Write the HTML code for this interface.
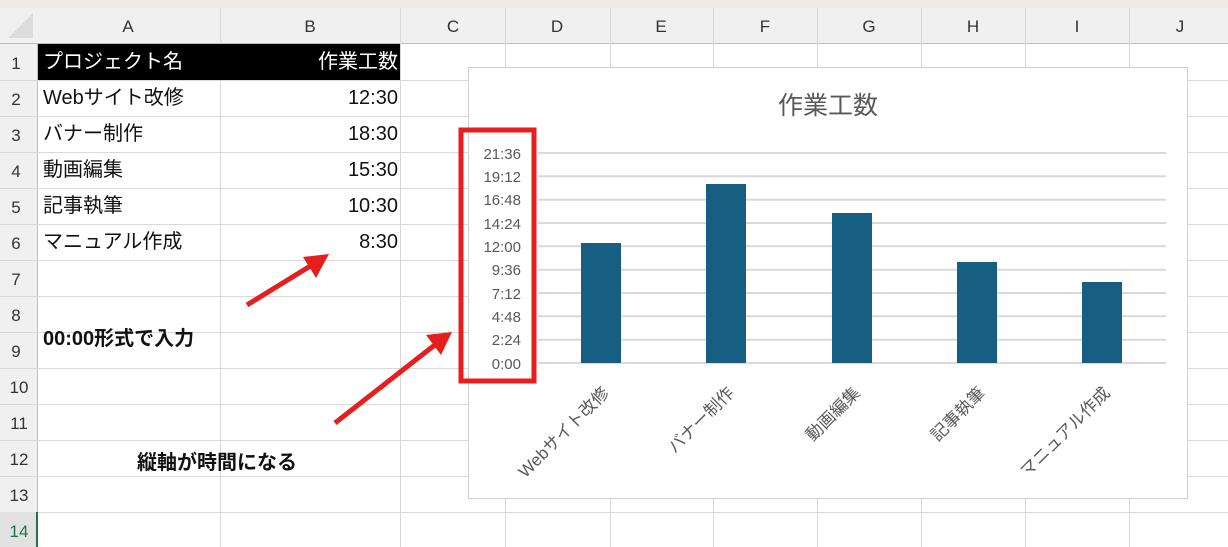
<!DOCTYPE html>
<html><head><meta charset="utf-8"><style>
body{margin:0;width:1228px;height:547px;overflow:hidden;background:#fff;font-family:"Liberation Sans","Noto Sans CJK JP",sans-serif;position:relative}
.a{position:absolute}
.cell{position:absolute;font-size:20px;color:#111;line-height:36px;white-space:nowrap}
</style></head><body>
<div class="a" style="left:0;top:0;width:1228px;height:8px;background:#efebe5"></div>
<div class="a" style="left:0;top:8px;width:1228px;height:36px;background:#f0f0f0;border-bottom:1px solid #bdbdbd;box-sizing:border-box"></div>
<div class="a" style="left:0;top:44px;width:38px;height:503px;background:#f0f0f0;border-right:1px solid #bdbdbd;box-sizing:border-box"></div>
<svg class="a" style="left:0;top:0" width="1228" height="547">
<polygon points="8,38 33,13 33,38" fill="#dcdcdc"/>
<g stroke="#d9d9d9" stroke-width="1">
<line x1="220.5" y1="8" x2="220.5" y2="547"/><line x1="400.5" y1="8" x2="400.5" y2="547"/>
<line x1="505.5" y1="8" x2="505.5" y2="547"/><line x1="610.5" y1="8" x2="610.5" y2="547"/>
<line x1="713.5" y1="8" x2="713.5" y2="547"/><line x1="817.5" y1="8" x2="817.5" y2="547"/>
<line x1="921.5" y1="8" x2="921.5" y2="547"/><line x1="1025.5" y1="8" x2="1025.5" y2="547"/>
<line x1="1129.5" y1="8" x2="1129.5" y2="547"/>
<line x1="0" y1="80.5" x2="1228" y2="80.5"/><line x1="0" y1="116.5" x2="1228" y2="116.5"/>
<line x1="0" y1="152.5" x2="1228" y2="152.5"/><line x1="0" y1="188.5" x2="1228" y2="188.5"/>
<line x1="0" y1="224.5" x2="1228" y2="224.5"/><line x1="0" y1="260.5" x2="1228" y2="260.5"/>
<line x1="0" y1="296.5" x2="1228" y2="296.5"/><line x1="0" y1="332.5" x2="1228" y2="332.5"/>
<line x1="0" y1="368.5" x2="1228" y2="368.5"/><line x1="0" y1="404.5" x2="1228" y2="404.5"/>
<line x1="0" y1="440.5" x2="1228" y2="440.5"/><line x1="0" y1="476.5" x2="1228" y2="476.5"/>
<line x1="0" y1="512.5" x2="1228" y2="512.5"/>
</g>
<rect x="0" y="512" width="38" height="35" fill="#e1e1e1"/>
<rect x="36" y="512" width="2" height="35" fill="#217346"/>
<g font-size="17" fill="#333" text-anchor="middle" font-family="Liberation Sans, sans-serif">
<text x="128" y="32">A</text><text x="310" y="32">B</text><text x="453" y="32">C</text><text x="557" y="32">D</text><text x="661" y="32">E</text><text x="765" y="32">F</text><text x="869" y="32">G</text><text x="973" y="32">H</text><text x="1077" y="32">I</text><text x="1180" y="32">J</text>
<text x="16" y="69">1</text><text x="16" y="105">2</text><text x="16" y="141">3</text><text x="16" y="177">4</text><text x="16" y="213">5</text><text x="16" y="249">6</text><text x="16" y="285">7</text><text x="16" y="321">8</text><text x="16" y="357">9</text><text x="19" y="393">10</text><text x="19" y="429">11</text><text x="19" y="465">12</text><text x="19" y="501">13</text><text x="19" y="537" fill="#217346">14</text>
</g>
</svg>
<div class="a" style="left:38px;top:44px;width:362px;height:36px;background:#000"></div>
<div class="cell" style="left:43px;top:44px;color:#fff">プロジェクト名</div>
<div class="cell" style="right:830px;top:44px;color:#fff">作業工数</div>
<div class="cell" style="left:43px;top:80px">Webサイト改修</div><div class="cell" style="right:830px;top:80px">12:30</div>
<div class="cell" style="left:43px;top:116px">バナー制作</div><div class="cell" style="right:830px;top:116px">18:30</div>
<div class="cell" style="left:43px;top:152px">動画編集</div><div class="cell" style="right:830px;top:152px">15:30</div>
<div class="cell" style="left:43px;top:188px">記事執筆</div><div class="cell" style="right:830px;top:188px">10:30</div>
<div class="cell" style="left:43px;top:224px">マニュアル作成</div><div class="cell" style="right:830px;top:224px">8:30</div>
<div class="cell" style="left:43px;top:321px;font-weight:bold">00:00形式で入力</div>
<div class="cell" style="left:137px;top:445px;font-weight:bold">縦軸が時間になる</div>
<svg class="a" style="left:0;top:0" width="1228" height="547">
<rect x="468.5" y="67.5" width="719" height="431" fill="#fff" stroke="#d0d0d0"/>
<text x="828" y="114" font-size="25" fill="#595959" text-anchor="middle">作業工数</text>
<g stroke="#d9d9d9" stroke-width="2">
<line x1="538" y1="153" x2="1166" y2="153"/><line x1="538" y1="176.3" x2="1166" y2="176.3"/><line x1="538" y1="199.7" x2="1166" y2="199.7"/><line x1="538" y1="223" x2="1166" y2="223"/><line x1="538" y1="246.3" x2="1166" y2="246.3"/><line x1="538" y1="269.7" x2="1166" y2="269.7"/><line x1="538" y1="293" x2="1166" y2="293"/><line x1="538" y1="316.3" x2="1166" y2="316.3"/><line x1="538" y1="339.7" x2="1166" y2="339.7"/><line x1="538" y1="363" x2="1166" y2="363"/>
</g>
<g fill="#175f82">
<rect x="581" y="243" width="40" height="120"/><rect x="706" y="184" width="40" height="179"/><rect x="832" y="213" width="40" height="150"/><rect x="957" y="262" width="40" height="101"/><rect x="1082" y="282" width="40" height="81"/>
</g>
<g font-size="15" fill="#595959" text-anchor="end">
<text x="521" y="159">21:36</text><text x="521" y="182">19:12</text><text x="521" y="205">16:48</text><text x="521" y="229">14:24</text><text x="521" y="252">12:00</text><text x="521" y="275">9:36</text><text x="521" y="299">7:12</text><text x="521" y="322">4:48</text><text x="521" y="345">2:24</text><text x="521" y="369">0:00</text>
</g>
<g font-size="17" fill="#595959" text-anchor="end">
<text transform="translate(610,394) rotate(-45)">Webサイト改修</text>
<text transform="translate(735,394) rotate(-45)">バナー制作</text>
<text transform="translate(861,394) rotate(-45)">動画編集</text>
<text transform="translate(986,394) rotate(-45)">記事執筆</text>
<text transform="translate(1111,394) rotate(-45)">マニュアル作成</text>
</g>
<rect x="461" y="130" width="73" height="251" fill="none" stroke="#e51e1e" stroke-width="5"/>
<g stroke="#e51e1e" stroke-width="5" fill="#e51e1e">
<line x1="247" y1="305" x2="312" y2="265"/>
<polygon points="329,254 303,257 316,278" stroke="none"/>
<line x1="335" y1="423" x2="436" y2="344"/>
<polygon points="452,332 426,335 441,355" stroke="none"/>
</g>
</svg>
</body></html>
